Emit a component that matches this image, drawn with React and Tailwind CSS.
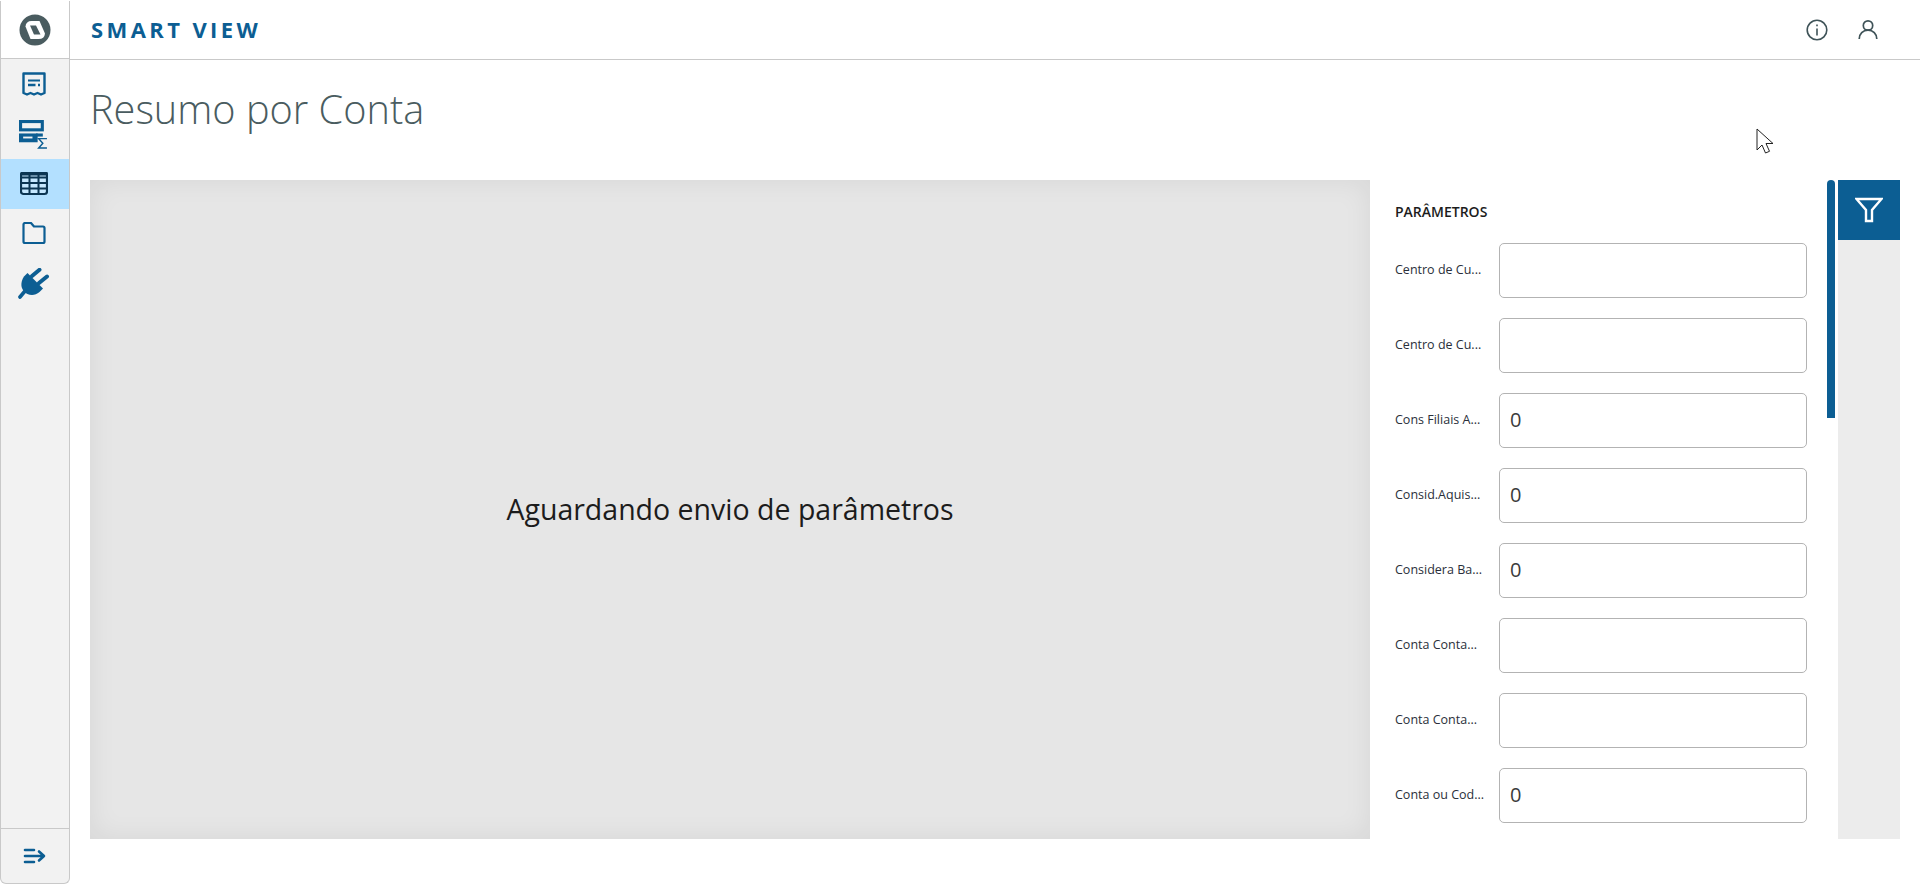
import React from 'react';

const blue = '#0c5e93';

const fields = [
  { label: 'Centro de Cu...', value: '' },
  { label: 'Centro de Cu...', value: '' },
  { label: 'Cons Filiais A...', value: '0' },
  { label: 'Consid.Aquis...', value: '0' },
  { label: 'Considera Ba...', value: '0' },
  { label: 'Conta Conta...', value: '' },
  { label: 'Conta Conta...', value: '' },
  { label: 'Conta ou Cod...', value: '0' },
];

const TotvsLogo = () => (
  <svg width="32" height="32" viewBox="0 0 32 32">
    <circle cx="16" cy="16" r="15.500" fill="#4a5c60" />
    <path d="M6.500 12.500Q7 7 12.500 7H20.500L26 19.500Q25.500 25 19.500 25H11.500z" fill="#fff" />
    <path d="M11 11.500H17L21.500 20.500H15z" fill="#4a5c60" />
  </svg>
);

const ReceiptIcon = () => (
  <svg width="24" height="24" viewBox="0 0 24 24" fill="none" stroke={blue} strokeWidth="2.400">
    <path d="M1.500 21V1.500h21V21l-3.500 1.500-3.500-1.500-3.500 1.500-3.500-1.500-3.500 1.500z" strokeLinejoin="round" />
    <path d="M6 8.500h12" strokeWidth="2" />
    <path d="M6 13h7.500M16 13h2" strokeWidth="2.400" />
  </svg>
);

const SummaryIcon = () => (
  <svg width="29" height="29" viewBox="0 0 28 28" fill="none" stroke={blue}>
    <rect x="1.500" y="1.500" width="21" height="8" strokeWidth="3" />
    <rect x="1.500" y="14.500" width="15" height="5.500" fill={blue} strokeWidth="3" />
    <rect x="4" y="16" width="9" height="1.800" fill="#f2f2f2" stroke="none" />
    <path d="M16.500 14.500h6.500" strokeWidth="3" />
    <path d="M27 18h-8l4 4.500-4 4.500h8" strokeWidth="1.400" />
  </svg>
);

const TableIcon = () => (
  <svg width="28" height="24" viewBox="0 1 28 24">
    <rect x="1" y="1" width="26" height="22" rx="2.500" fill="#c6e8ff" stroke="#0b3552" strokeWidth="2.200" />
    <path d="M1 6.500h26M1 12h26M1 17.500h26M9.500 2v21M18.500 2v21" stroke="#0b3552" strokeWidth="2" />
    <rect x="1" y="1" width="26" height="3.500" fill="#0b3552" />
  </svg>
);

const FolderIcon = () => (
  <svg width="24" height="24" viewBox="0 1.500 24 24" fill="none" stroke={blue} strokeWidth="2.200" strokeLinejoin="round">
    <path d="M1.500 4A1.500 1.500 0 0 1 3 2.500h6l3 3.500h9A1.500 1.500 0 0 1 22.500 7.500V21A1.500 1.500 0 0 1 21 22.500H3A1.500 1.500 0 0 1 1.500 21z" />
  </svg>
);

const PlugIcon = () => (
  <svg width="32" height="32" viewBox="0 0 32 32" fill={blue}>
    <path d="M9.500 5 25 20.500 21.500 24C16 29 9 27 6 23.500S2 15 6 8.500z" />
    <path d="M14 8 21.500 1.800M21 15 29 8.500" stroke={blue} strokeWidth="4" strokeLinecap="round" />
    <path d="M7 23 2 29" stroke={blue} strokeWidth="3.600" strokeLinecap="round" />
  </svg>
);

const CollapseIcon = () => (
  <svg width="24" height="18" viewBox="0 0 24 18" fill="none" stroke={blue} strokeWidth="2.600" strokeLinecap="round" strokeLinejoin="round">
    <path d="M2 3h9M2 9h18M2 15h9M16 4.500l5 4.500-5 4.500" />
  </svg>
);

const InfoIcon = () => (
  <svg width="22" height="22" viewBox="0 0 22 22" fill="none" stroke="#3f5358" strokeWidth="1.600">
    <circle cx="11" cy="11" r="9.800" />
    <path d="M11 9.500V16.500" />
    <path d="M11 5.500v1.800" />
  </svg>
);

const UserIcon = () => (
  <svg width="20" height="22" viewBox="0 0 20 22" fill="none" stroke="#3f5358" strokeWidth="1.700">
    <circle cx="10" cy="6.500" r="4.700" />
    <path d="M1.200 20c0-5 3.800-8.800 8.800-8.800s8.800 3.800 8.800 8.800" />
  </svg>
);

const FilterIcon = () => (
  <svg width="28" height="26" viewBox="0 0 28 26" fill="none" stroke="#fff" strokeWidth="2.400" strokeLinejoin="miter">
    <path d="M1.500 2h25L17 13v11h-6V13z" />
  </svg>
);

const CursorIcon = () => (
  <svg width="20" height="28" viewBox="0 0 20 28" fill="#fff" stroke="#222" strokeWidth="1">
    <path d="M1 1v21l5-5 3.500 8 4-1.700-3.500-7.800h7z" />
  </svg>
);

const navItems = [
  { icon: <ReceiptIcon /> },
  { icon: <SummaryIcon /> },
  { icon: <TableIcon />, active: true },
  { icon: <FolderIcon /> },
  { icon: <PlugIcon /> },
];

const App = () => {
  return (
    <div className="relative flex h-screen bg-white font-['Open_Sans','Noto_Sans',sans-serif] overflow-hidden">
      {/* menu lateral */}
      <aside className="w-[70px] shrink-0 flex flex-col mt-px bg-[#f2f2f2] border border-t-0 border-[#c9c9c9] rounded-b-md">
        <div className="h-[58px] flex items-center justify-center bg-white border-b border-[#c9c9c9]">
          <TotvsLogo />
        </div>
        <nav className="flex-1 pr-[3px]">
          {navItems.map((item, i) => (
            <div key={i} className={`h-[50px] -mr-[3px] pr-[3px] flex items-center justify-center ${item.active ? 'bg-[#b3e0ff]' : ''}`}>
              {item.icon}
            </div>
          ))}
        </nav>
        <div className="h-[55px] flex items-center justify-center border-t border-[#c9c9c9]">
          <CollapseIcon />
        </div>
      </aside>

      <div className="flex-1 min-w-0 flex flex-col">
        <header className="h-[60px] shrink-0 flex items-center justify-between pl-[21px] pr-[42px] border-b border-[#c9c9c9]">
          <span className="text-[22px] font-bold tracking-[3.4px] text-[#0c5e93]">SMART VIEW</span>
          <div className="flex items-center gap-[30px]">
            <InfoIcon />
            <UserIcon />
          </div>
        </header>

        <main className="flex-1 min-h-0 flex flex-col pl-[20px] pr-[20px] pb-[45px]">
          <h1 className="h-[120px] shrink-0 pt-[23px] text-[39.7px] leading-[52px] font-light text-[#4a5c60]">Resumo por Conta</h1>

          <div className="flex-1 min-h-0 flex">
            <div className="w-[1280px] shrink-0 flex items-center justify-center bg-[#e6e6e6] shadow-[inset_0_0_28px_rgba(0,0,0,0.07)]">
              <span className="text-[28.5px] text-[#1c1c1c]">Aguardando envio de parâmetros</span>
            </div>

            <div className="flex-1 min-w-0 flex overflow-hidden">
              <form className="flex-1 min-w-0 pl-[25px] pr-[19px]">
                <h2 className="h-[63px] pt-[23px] text-[14px] leading-[18px] font-semibold text-[#1c1c1c]">PARÂMETROS</h2>
                <div className="flex flex-col gap-[20px]">
                  {fields.map((f, i) => (
                    <label key={i} className="flex items-center">
                      <span className="w-[104px] shrink-0 text-[12.5px] text-[#2a2f3a] whitespace-nowrap">{f.label}</span>
                      <input
                        readOnly
                        value={f.value}
                        className="w-[308px] h-[55px] px-[10px] pb-[2px] rounded-[5px] border border-[#b3b3b3] bg-white text-[20px] text-[#3b3b3b] outline-none"
                      />
                    </label>
                  ))}
                </div>
              </form>

              <div className="w-[8px] mr-[1px] shrink-0 self-stretch">
                <div className="h-[238px] rounded-t-full rounded-b-sm bg-[#0c5e93]" />
              </div>
            </div>

            <div className="w-[62px] ml-[2px] shrink-0 bg-[#ececec]">
              <div className="h-[60px] flex items-center justify-center bg-[#0c5e93]">
                <FilterIcon />
              </div>
            </div>
          </div>
        </main>
      </div>

      {/* ponteiro do mouse capturado na tela */}
      <div className="absolute left-[1756px] top-[128px]">
        <CursorIcon />
      </div>
    </div>
  );
};

export default App;
